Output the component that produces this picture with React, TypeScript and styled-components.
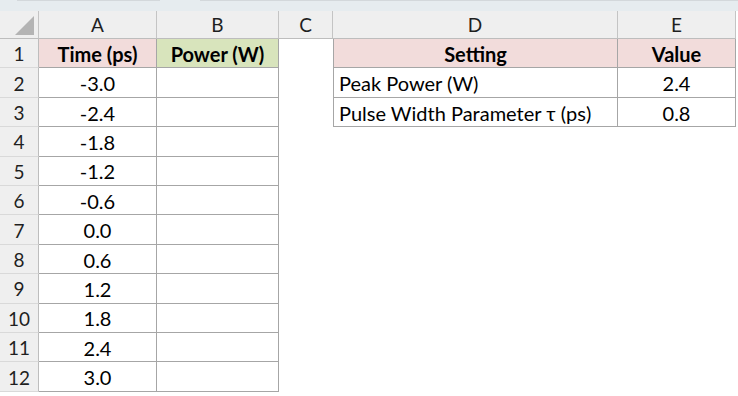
import React from "react";
import styled, { createGlobalStyle } from "styled-components";

const GlobalStyle = createGlobalStyle`
  html, body {
    margin: 0;
    padding: 0;
    background: #ffffff;
  }
  body {
    font-family: Lato, "Noto Sans", sans-serif;
    color: #000000;
  }
`;

const columns = ["A", "B", "C", "D", "E"];
const times = ["-3.0", "-2.4", "-1.8", "-1.2", "-0.6", "0.0", "0.6", "1.2", "1.8", "2.4", "3.0"];
const settings = [
  { label: "Peak Power (W)", value: "2.4" },
  { label: "Pulse Width Parameter τ (ps)", value: "0.8" },
];

const Page = styled.div`
  width: 738px;
  height: 396px;
  overflow: hidden;
  background: #ffffff;
`;

const FormulaStrip = styled.div`
  height: 11px;
  display: flex;
  background: #e6ecef;
`;

const StripSegment = styled.div<{ $w: number }>`
  width: ${({ $w }) => $w}px;
  height: 1px;
  background: #d3d8db;
`;

const Gap = styled.div<{ $w: number }>`
  width: ${({ $w }) => $w}px;
`;

const Sheet = styled.div`
  display: grid;
  grid-template-columns: 39px 118px 122px 54px 285px 118px 2px;
  grid-template-rows: 28px repeat(12, 29.42px);
`;

const Corner = styled.div`
  position: relative;
  background: #efefef;
  border-right: 1px solid #c4c4c4;
  border-bottom: 1px solid #bdbdbd;
  box-sizing: border-box;
`;

const CornerMark = styled.svg`
  position: absolute;
  right: 3px;
  bottom: 3px;
`;

const ColHead = styled.div`
  display: flex;
  align-items: center;
  justify-content: center;
  background: #efefef;
  border-right: 1px solid #c4c4c4;
  border-bottom: 1px solid #bdbdbd;
  box-sizing: border-box;
  font-size: 19px;
  color: #1f1f1f;
`;

const RowHead = styled.div`
  display: flex;
  align-items: center;
  justify-content: center;
  padding-top: 1px;
  background: #efefef;
  border-right: 1px solid #bdbdbd;
  border-bottom: 1px solid #d9d9d9;
  box-sizing: border-box;
  font-size: 19px;
  color: #1f1f1f;
`;

const Cell = styled.div<{
  $bg?: string;
  $bold?: boolean;
  $left?: boolean;
  $boxed?: boolean;
  $edge?: boolean;
}>`
  display: flex;
  align-items: center;
  justify-content: ${({ $left }) => ($left ? "flex-start" : "center")};
  padding: ${({ $left }) => ($left ? "1px 0 0 5px" : "1px 0 0 0")};
  background: ${({ $bg }) => $bg || "#ffffff"};
  box-sizing: border-box;
  border-right: ${({ $boxed }) => ($boxed ? "1px solid #a6a6a6" : "none")};
  border-bottom: ${({ $boxed }) => ($boxed ? "1px solid #a6a6a6" : "none")};
  border-left: ${({ $edge }) => ($edge ? "1px solid #a6a6a6" : "none")};
  font-size: 20px;
  font-weight: ${({ $bold }) => ($bold ? 700 : 400)};
  white-space: nowrap;
`;

const Blank = styled.div``;

const PINK = "#f2dcdb";
const GREEN = "#d8e4bc";

export default function App() {
  const rows: React.ReactNode[] = [];
  for (let r = 1; r <= 12; r++) {
    rows.push(<RowHead key={`h${r}`}>{r}</RowHead>);
    if (r === 1) {
      rows.push(
        <Cell key="a1" $bg={PINK} $bold $boxed>
          Time (ps)
        </Cell>,
        <Cell key="b1" $bg={GREEN} $bold $boxed>
          Power (W)
        </Cell>,
        <Cell key="c1" />,
        <Cell key="d1" $bg={PINK} $bold $boxed $edge>
          Setting
        </Cell>,
        <Cell key="e1" $bg={PINK} $bold $boxed>
          Value
        </Cell>
      );
    } else {
      rows.push(
        <Cell key={`a${r}`} $boxed>
          {times[r - 2]}
        </Cell>,
        <Cell key={`b${r}`} $boxed />,
        <Cell key={`c${r}`} />
      );
      const s = settings[r - 2];
      if (s) {
        rows.push(
          <Cell key={`d${r}`} $boxed $edge $left>
            {s.label}
          </Cell>,
          <Cell key={`e${r}`} $boxed>
            {s.value}
          </Cell>
        );
      } else {
        rows.push(<Cell key={`d${r}`} />, <Cell key={`e${r}`} />);
      }
    }
    rows.push(<Blank key={`z${r}`} />);
  }

  return (
    <Page>
      <GlobalStyle />
      <FormulaStrip>
        <Gap $w={17} />
        <StripSegment $w={143} />
        <Gap $w={40} />
        <StripSegment $w={538} />
      </FormulaStrip>
      <Sheet>
        <Corner>
          <CornerMark width="20" height="19" viewBox="0 0 20 19">
            <polygon points="19,0 19,19 0,19" fill="#b4b4b4" />
          </CornerMark>
        </Corner>
        {columns.map((c) => (
          <ColHead key={c}>{c}</ColHead>
        ))}
        <Blank />
        {rows}
      </Sheet>
    </Page>
  );
}
